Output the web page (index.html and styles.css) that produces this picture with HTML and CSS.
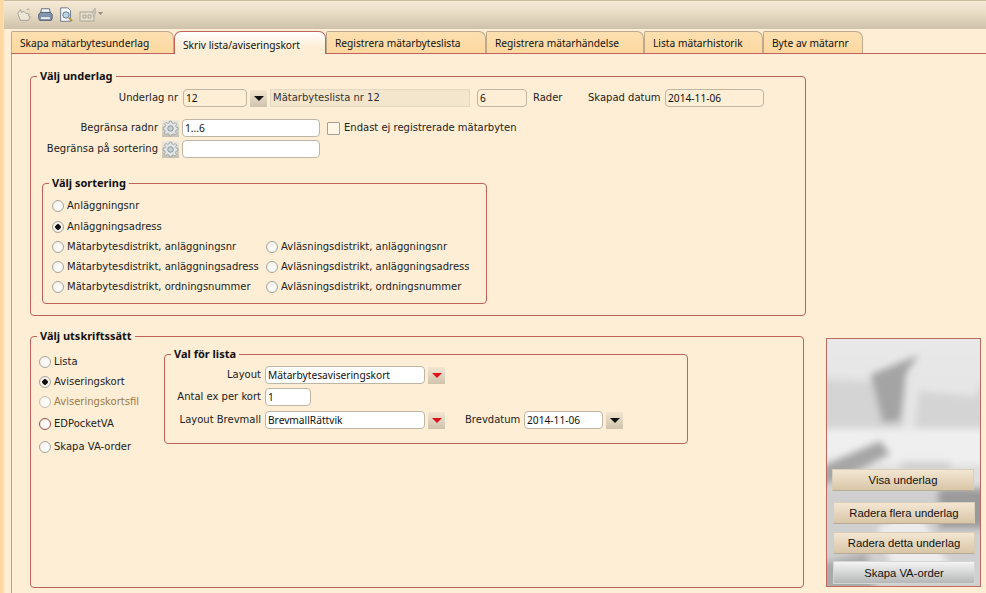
FILE: index.html
```html
<!DOCTYPE html>
<html lang="sv">
<head>
<meta charset="utf-8">
<title>Mätarbyte</title>
<link rel="stylesheet" href="styles.css">
</head>
<body>
<div class="app">
  <div class="toolbar">
    <svg class="ic ic-open" viewBox="0 0 18 18"><path d="M2 7l3-4 1 3 3-1 2 2 4 1-1 2 2 1-2 4H5L3 10z" fill="#efe7d6" stroke="#9d9a8e"/><path d="M12 3l2-1 1 2" fill="none" stroke="#a9a79c"/></svg>
    <svg class="ic ic-print" viewBox="0 0 18 18"><path d="M5 2h9l1 5H4z" fill="#fff" stroke="#4d5d73"/><path d="M2 8l2-2h11l2 2v5l-1 2H3l-1-2z" fill="#8296ad" stroke="#46566c"/><path d="M4 11h11v3H4z" fill="#eef1f5" stroke="#5d6d82" stroke-width=".6"/></svg>
    <svg class="ic ic-prev" viewBox="0 0 18 18"><path d="M3 1h8l3 3v12H3z" fill="#fff" stroke="#5a6a84"/><circle cx="9" cy="9" r="3.6" fill="#bcd6e8" stroke="#59697f"/><path d="M12 12l4 4" stroke="#b9952d" stroke-width="2"/></svg>
    <svg class="ic ic-mail" viewBox="0 0 24 18"><rect x="1" y="6" width="14" height="9" fill="#e6dfd0" stroke="#a9a595"/><path d="M4 9h3v3H4zM9 9h3v3H9z" fill="none" stroke="#9b988c" stroke-width=".8"/><path d="M13 6l3-4 1 4-2 5z" fill="#c9c5b7" stroke="#a9a595" stroke-width=".6"/><path d="M19 6h5l-2.500 3z" fill="#8f8c80"/></svg>
  </div>
  <div class="tabs">
    <div class="tab">Skapa mätarbytesunderlag</div>
    <div class="tab active">Skriv lista/aviseringskort</div>
    <div class="tab">Registrera mätarbyteslista</div>
    <div class="tab">Registrera mätarhändelse</div>
    <div class="tab">Lista mätarhistorik</div>
    <div class="tab">Byte av mätarnr</div>
  </div>
  <main class="panel">
    <fieldset class="group group-source">
      <legend>Välj underlag</legend>
      <div class="row row-source">
        <label class="lab lab-source">Underlag nr</label>
        <span class="inp inp-nr">12</span>
        <button class="drop"><i class="tri"></i></button>
        <span class="inp inp-ro inp-name">Mätarbyteslista nr 12</span>
        <span class="inp inp-count">6</span>
        <span class="txt txt-rader">Rader</span>
        <label class="lab-date">Skapad datum</label>
        <span class="inp inp-date">2014-11-06</span>
      </div>
      <div class="row row-limit">
        <label class="lab lab-limit">Begränsa radnr</label>
        <button class="gear"><svg viewBox="0 0 16 16"><use href="#gear"/></svg></button>
        <span class="inp inp-w inp-limit">1...6</span>
        <span class="check"></span>
        <span class="txt">Endast ej registrerade mätarbyten</span>
      </div>
      <div class="row row-limit2">
        <label class="lab lab-limit">Begränsa på sortering</label>
        <button class="gear"><svg viewBox="0 0 16 16"><use href="#gear"/></svg></button>
        <span class="inp inp-w inp-limit"></span>
      </div>
      <fieldset class="group group-sort">
        <legend>Välj sortering</legend>
        <div class="radio-grid">
          <div class="radio wide"><i class="dot"></i>Anläggningsnr</div>
          <div class="radio wide"><i class="dot on"></i>Anläggningsadress</div>
          <div class="radio"><i class="dot"></i>Mätarbytesdistrikt, anläggningsnr</div>
          <div class="radio"><i class="dot"></i>Avläsningsdistrikt, anläggningsnr</div>
          <div class="radio"><i class="dot"></i>Mätarbytesdistrikt, anläggningsadress</div>
          <div class="radio"><i class="dot"></i>Avläsningsdistrikt, anläggningsadress</div>
          <div class="radio"><i class="dot"></i>Mätarbytesdistrikt, ordningsnummer</div>
          <div class="radio"><i class="dot"></i>Avläsningsdistrikt, ordningsnummer</div>
        </div>
      </fieldset>
    </fieldset>
    <div class="lower">
      <fieldset class="group group-print">
        <legend>Välj utskriftssätt</legend>
        <div class="print-body">
          <div class="print-radios">
            <div class="radio"><i class="dot"></i>Lista</div>
            <div class="radio"><i class="dot on"></i>Aviseringskort</div>
            <div class="radio disabled"><i class="dot"></i>Aviseringskortsfil</div>
            <div class="radio"><i class="dot red"></i>EDPocketVA</div>
            <div class="radio"><i class="dot"></i>Skapa VA-order</div>
          </div>
          <fieldset class="group group-opts">
            <legend>Val för lista</legend>
            <div class="row row-opt">
              <label class="lab lab-opt">Layout</label>
              <span class="inp inp-w inp-layout">Mätarbytesaviseringskort</span>
              <button class="drop"><i class="tri red"></i></button>
            </div>
            <div class="row row-opt">
              <label class="lab lab-opt">Antal ex per kort</label>
              <span class="inp inp-w inp-copies">1</span>
            </div>
            <div class="row row-opt">
              <label class="lab lab-opt">Layout Brevmall</label>
              <span class="inp inp-w inp-layout">BrevmallRättvik</span>
              <button class="drop"><i class="tri red"></i></button>
              <label class="lab-letter">Brevdatum</label>
              <span class="inp inp-w inp-letter">2014-11-06</span>
              <button class="drop"><i class="tri"></i></button>
            </div>
          </fieldset>
        </div>
      </fieldset>
      <aside class="side">
        <svg class="side-art" viewBox="0 0 154 248" preserveAspectRatio="none">
          <defs>
            <filter id="soft" x="-10%" y="-10%" width="120%" height="120%"><feGaussianBlur stdDeviation="4"/></filter>
            <linearGradient id="sky" x1="0" y1="0" x2="0" y2="1"><stop offset="0" stop-color="#e9e9e9"/><stop offset="1" stop-color="#d6d6d6"/></linearGradient>
            <clipPath id="artclip"><rect width="154" height="248"/></clipPath>
          </defs>
          <g clip-path="url(#artclip)">
          <rect width="154" height="248" fill="url(#sky)"/>
          <g filter="url(#soft)">
            <path d="M-8 40l170 8v46H-8z" fill="#d4d4d4"/>
            <path d="M44 36l48-20-12 18-6 48-18 2z" fill="#a4a4a4"/>
            <path d="M80 40l6-8 66 14v12l-60-6-4 40H76z" fill="#e6e6e6"/>
            <path d="M-8 90h170v36H-8z" fill="#efefef"/>
            <path d="M-8 128l62-26 10 14-72 34z" fill="#a6a6a6"/>
            <path d="M74 124h50v6H74z" fill="#c6c6c6"/>
            <path d="M-8 150h170v108H-8z" fill="#cfcfcf"/>
            <path d="M50 190l40-20 40 70H70z" fill="#ececec"/>
            <path d="M112 150h50v40h-50z" fill="#9a9a9a"/>
            <path d="M-8 226l48-12 10 44H-8z" fill="#aaaaaa"/>
          </g>
          </g>
        </svg>
        <button class="cmd cmd-show">Visa underlag</button>
        <button class="cmd cmd-del">Radera flera underlag</button>
        <button class="cmd cmd-del2">Radera detta underlag</button>
        <button class="cmd cmd-grey">Skapa VA-order</button>
      </aside>
    </div>
  </main>
</div>
<svg class="defs" width="0" height="0"><defs>
  <g id="gear"><path d="M7 1h2l.4 1.800 1.400.6 1.600-1 1.400 1.400-1 1.600.6 1.400L15 7.200v2l-1.800.4-.6 1.400 1 1.600-1.400 1.400-1.600-1-1.400.6L9 15H7l-.4-1.800-1.400-.6-1.600 1-1.400-1.400 1-1.600-.6-1.400L1 9V7l1.800-.4.6-1.400-1-1.600 1.400-1.400 1.600 1 1.400-.6z" fill="#e3e6e6" stroke="#9aa0a2" stroke-width=".8"/><circle cx="8" cy="8" r="2.600" fill="#c8d0d2" stroke="#7f8a8e" stroke-width=".8"/></g>
</defs></svg>
</body>
</html>
```
FILE: styles.css
```css
* { box-sizing: border-box; }
html, body { margin: 0; height: 100%; }
body {
  width: 986px; height: 593px; overflow: hidden;
  background: #fdeed5;
  font: 10px/14px "DejaVu Sans", Verdana, sans-serif;
  color: #222;
}
.app {
  height: 593px; overflow: hidden;
  background: linear-gradient(90deg, #fdd8a2 0, #fdd8a2 3px, #fdeed5 5px);
}
.defs { display: block; height: 0; }

.toolbar {
  height: 29px; margin-left: 4px;
  display: flex; align-items: center; gap: 5px; padding: 0 0 0 12px;
  border-top: 1px solid #cbbb9f;
  background: linear-gradient(#f6ead6, #e9dcc5 45%, #cdc1a9);
}
.ic { width: 16px; height: 16px; flex: none; }
.ic-mail { width: 24px; height: 18px; }

.tabs { display: flex; height: 24px; padding: 2px 0 0 11px; align-items: flex-end; }
.tab {
  height: 22px; padding: 3px 0 0 8px;
  border: 1px solid #bda98d; border-bottom: 0; border-radius: 2px 7px 0 0;
  background: linear-gradient(#fde0b0, #fdd8a0);
  color: #111; white-space: nowrap;
  font: 10.200px/16px "Noto Sans", sans-serif;
}
.tab:nth-child(1) { width: 163px; }
.tab:nth-child(2) { width: 152px; height: 23px; border-color: #c0625c; background: linear-gradient(#fff, #fdeed5 70%); border-radius: 7px 7px 0 0; position: relative; top: 1px; margin-top: -1px; padding-top: 5px; z-index: 1; }
.tab:nth-child(3) { width: 160px; }
.tab:nth-child(4) { width: 158px; }
.tab:nth-child(5) { width: 119px; }
.tab:nth-child(6) { width: 100px; }

.panel {
  margin-left: 11px; height: 540px; padding: 15px 0 0 18px;
  border-top: 1px solid #c0625c; border-left: 1px solid #c0a080;
}

.group { margin: 0; padding: 0; border: 1px solid #bf625c; border-radius: 4px; min-width: 0; }
.group > legend {
  padding: 0 3px;
  font: bold 11px/14px "Noto Sans", sans-serif; color: #111;
}
.group-source { width: 776px; height: 247px; padding: 5px 0 0 11px; }
.group-source > legend { margin-left: -5px; }
.group-sort { width: 445px; height: 128px; margin-top: 17px; padding: 5px 0 0 9px; }
.group-sort > legend { margin-left: -3px; }
.group-print > legend { margin-left: 6px; }
.group-opts > legend { margin-left: 5px; }

.row { display: flex; align-items: center; }
.row-source { height: 20px; }
.row-limit { height: 20px; margin-top: 10px; }
.row-limit2 { height: 20px; margin-top: 1px; }
.lab { text-align: right; flex: none; white-space: nowrap; }
.lab-source { width: 136px; margin-right: 5px; }
.lab-limit { width: 116px; margin-right: 4px; }
.lab-opt { width: 95px; margin-right: 4px; }

.inp {
  display: block; height: 18px; padding: 0 2px; flex: none;
  border: 1px solid #bfb5a3; border-radius: 4px; background: #fdeed5;
  font: 10.200px/16px "Noto Sans", sans-serif; color: #111;
  white-space: nowrap; overflow: hidden;
}
.inp-w { background: #fff; }
.inp-ro { border-radius: 0; border-color: #e3d8c2; background: #f3e6cd; color: #333; font: 10px/16px "DejaVu Sans", sans-serif; }
.inp-nr { width: 64px; }
.inp-name { width: 200px; margin-left: 3px; }
.inp-count { width: 50px; margin-left: 7px; }
.txt-rader { margin-left: 6px; width: 55px; }
.lab-date { width: 77px; white-space: nowrap; }
.inp-date { width: 99px; }
.inp-limit { width: 138px; }
.inp-layout { width: 160px; }
.inp-copies { width: 46px; }
.inp-letter { width: 79px; }
.lab-letter { margin: 0 5px 0 20px; width: 54px; white-space: nowrap; }

.drop {
  width: 17px; height: 17px; padding: 0; margin: 1px 0 0 3px; flex: none;
  border: 0; display: flex; align-items: center; justify-content: center;
  background: linear-gradient(#f3e6d0, #cfc3ad);
}
.tri { width: 0; height: 0; border: 5px solid transparent; border-top: 5px solid #111; border-bottom: 0; }
.tri.red { border-top-color: #e0101c; }
.gear {
  width: 17px; height: 17px; padding: 0; flex: none; margin-right: 3px;
  border: 0; background: linear-gradient(#efe9dd, #c6c0b2);
}
.gear svg { display: block; width: 17px; height: 17px; }
.check { width: 13px; height: 13px; margin: 0 4px 0 7px; border: 1px solid #a5a097; border-radius: 1px; background: #fff6e6; flex: none; }

.radio-grid { display: grid; grid-template-columns: 214px auto; grid-template-rows: 22px; grid-auto-rows: 20px; margin-top: 0; }
.radio { display: flex; align-items: center; white-space: nowrap; }
.wide { grid-column: 1 / 3; }
.dot {
  width: 12px; height: 12px; margin-right: 3px; flex: none; border-radius: 50%;
  border: 1px solid #a7a59c;
  background: radial-gradient(circle at 60% 60%, #fff, #f1eee6);
}
.dot.on { background: radial-gradient(circle, #111 0 2.500px, #f4f2ea 3px); }
.dot.red { border-color: #9e4a4a; }
.disabled { color: #9a7b45; }
.disabled .dot { border-color: #c8c2ae; }

.lower { display: flex; margin-top: 13px; align-items: flex-start; }
.group-print { width: 774px; height: 259px; }
.print-body { display: flex; padding-top: 4px; }
.print-radios { width: 133px; padding: 5px 0 0 8px; display: flex; flex-direction: column; }
.print-radios .radio { height: 20px; }
.print-radios .radio:nth-child(4) { height: 22px; margin-top: 1px; }
.print-radios .radio:nth-child(5) { height: 22px; margin-top: 1px; }
.group-opts { width: 524px; height: 97px; padding: 5px 0 0 1px; }
.row-opt { height: 18px; margin-bottom: 4px; }
.row-opt:nth-of-type(2) { margin-bottom: 5px; }

.side {
  width: 155px; height: 249px; margin: 9px 0 0 22px; position: relative;
  border: 1px solid #bf6a60; display: flex; flex-direction: column;
  padding: 130px 0 0 5px;
}
.side-art { position: absolute; left: 0; top: 0; width: 100%; height: 100%; }
.cmd {
  position: relative; width: 142px; height: 22px; padding: 0; flex: none;
  border: 1px solid #d9ceb8; border-bottom-color: #b8ab93;
  background: linear-gradient(#f3e6d2, #d9c6a8);
  font: 11.300px/18px "Liberation Sans", Arial, sans-serif; color: #111;
}
.cmd-del { margin: 11px 0 0 1px; }
.cmd-del2 { margin: 8px 0 0 1px; }
.cmd-grey { margin: 7px 0 0 1px; height: 23px; border-color: #d5d5d5; background: linear-gradient(#f4f4f4, #b6b8b8); }
```
